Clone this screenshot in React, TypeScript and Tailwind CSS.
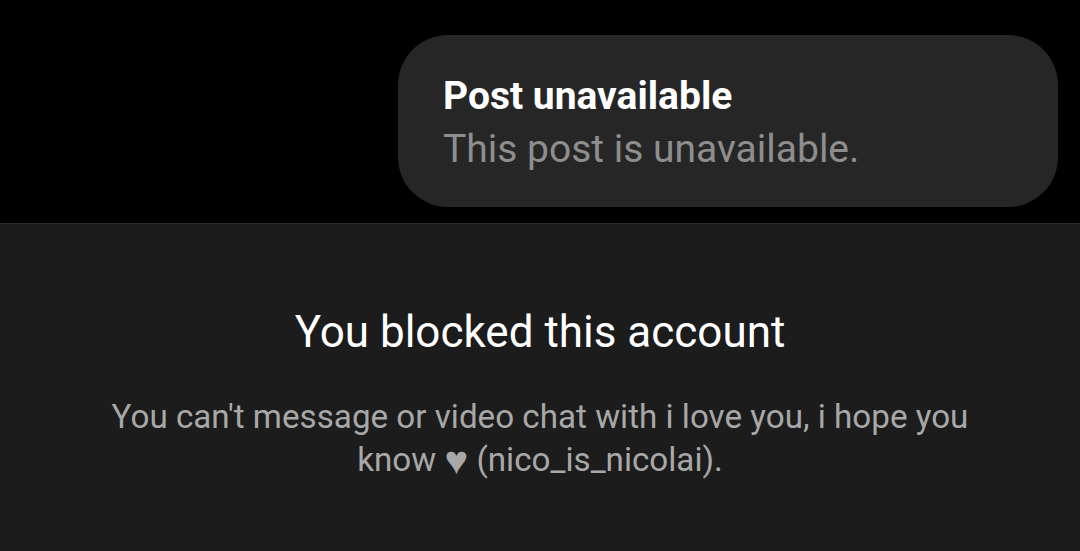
export default function App() {
  return (
    <div className="w-[1080px] h-[551px] overflow-hidden bg-black font-['Roboto',sans-serif]">
      <div className="h-[223px] flex justify-end pt-[35px] pr-[22px]">
        <div className="w-[660px] h-[172px] rounded-[50px] bg-[#262626] pl-[45px] pt-[35px] flex flex-col">
          <p className="text-[39px] leading-[53px] font-bold text-white">Post unavailable</p>
          <p className="text-[39px] leading-[53px] text-[#8e8e8e]">This post is unavailable.</p>
        </div>
      </div>
      <div className="h-[328px] bg-[#1c1c1c] border-t border-[#2a2a2a] flex flex-col items-center pt-[82px] text-center">
        <h2 className="text-[44px] leading-[52px] text-white">You blocked this account</h2>
        <p className="mt-[37px] w-[900px] text-[33.2px] leading-[43px] text-[#a8a8a8]">
          You can't message or video chat with i love you, i hope you know{" "}
          <span className="text-[40px] leading-[30px] inline-block align-[-3px]">♥</span> (nico_is_nicolai).
        </p>
      </div>
    </div>
  );
}
